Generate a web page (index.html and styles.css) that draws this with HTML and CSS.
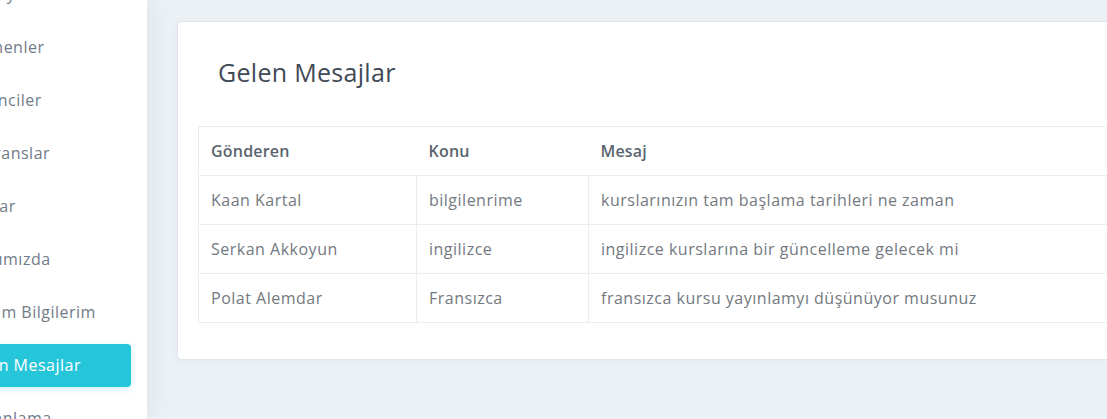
FILE: index.html
```html
<!DOCTYPE html>
<html lang="tr">
<head>
<meta charset="utf-8">
<title>Gelen Mesajlar</title>
<link rel="stylesheet" href="styles.css">
</head>
<body>
<div class="layout">
  <aside class="sidebar">
    <nav class="nav">
      <a class="nav-link" href="#">Anasayfa</a>
      <a class="nav-link" href="#">Eğitmenler</a>
      <a class="nav-link" href="#">Öğrenciler</a>
      <a class="nav-link" href="#">Referanslar</a>
      <a class="nav-link" href="#">Kurslar</a>
      <a class="nav-link" href="#">Hakkımızda</a>
      <a class="nav-link" href="#">İletişim Bilgilerim</a>
      <a class="nav-link active" href="#">Gelen Mesajlar</a>
      <a class="nav-link" href="#">Zamanlama</a>
    </nav>
  </aside>
  <main class="main">
    <section class="card">
      <h4 class="card-title">Gelen Mesajlar</h4>
      <table class="table">
        <colgroup>
          <col class="col-sender">
          <col class="col-subject">
          <col>
        </colgroup>
        <thead>
          <tr><th>Gönderen</th><th>Konu</th><th>Mesaj</th></tr>
        </thead>
        <tbody>
          <tr><td>Kaan Kartal</td><td>bilgilenrime</td><td>kurslarınızın tam başlama tarihleri ne zaman</td></tr>
          <tr><td>Serkan Akkoyun</td><td>ingilizce</td><td>ingilizce kurslarına bir güncelleme gelecek mi</td></tr>
          <tr><td>Polat Alemdar</td><td>Fransızca</td><td>fransızca kursu yayınlamyı düşünüyor musunuz</td></tr>
        </tbody>
      </table>
    </section>
  </main>
</div>
</body>
</html>
```
FILE: styles.css
```css
html, body {
  margin: 0;
  padding: 0;
  height: 100%;
  overflow: hidden;
}
body {
  background: #ebf1f5;
  font-family: "Open Sans", "Noto Sans", sans-serif;
  font-size: 16px;
  letter-spacing: 0.5px;
}
.layout {
  display: flex;
  height: 419px;
}
.sidebar {
  width: 147px;
  flex: none;
  background: #fff;
  overflow: hidden;
  box-shadow: 3px 0 22px rgba(40, 60, 80, 0.07);
  position: relative;
  z-index: 1;
}
.nav {
  display: flex;
  flex-direction: column;
  margin-top: -32px;
  margin-right: 16px;
}
.nav-link {
  display: block;
  height: 53px;
  line-height: 53px;
  margin-left: -50px;
  padding-left: 9px;
  color: #6f7c88;
  text-decoration: none;
  white-space: nowrap;
}
.nav-link.active {
  height: 43px;
  line-height: 43px;
  margin-top: 5px;
  margin-bottom: 5px;
  padding-left: 13px;
  background: #26c6da;
  color: #fff;
  font-weight: 500;
  border-radius: 4px;
  box-shadow: 0 2px 6px rgba(38, 198, 218, 0.25);
}
.main {
  flex: 1;
  padding: 21px 0 0 30px;
  min-width: 0;
}
.card {
  width: 1000px;
  background: #fff;
  border: 1px solid #dfe5ea;
  border-radius: 4px;
  padding: 20px 20px 36px;
  box-shadow: 0 1px 10px rgba(40, 60, 80, 0.04);
}
.card-title {
  margin: 17px 20px 41px;
  font-size: 25px;
  line-height: 26px;
  letter-spacing: 0.3px;
  font-weight: 400;
  color: #3f4a56;
}
.table {
  width: 100%;
  border-collapse: collapse;
  table-layout: fixed;
  border: 1px solid #ebedf0;
  margin-bottom: 0;
}
.col-sender { width: 218px; }
.col-subject { width: 172px; }
.table th,
.table td {
  height: 48px;
  padding: 0 12px;
  text-align: left;
  vertical-align: middle;
  white-space: nowrap;
}
.table th {
  font-weight: 600;
  letter-spacing: 0.2px;
  color: #5a646e;
  border-bottom: 1px solid #ebedf0;
}
.table td {
  color: #737980;
  border: 1px solid #ebedf0;
}
```
